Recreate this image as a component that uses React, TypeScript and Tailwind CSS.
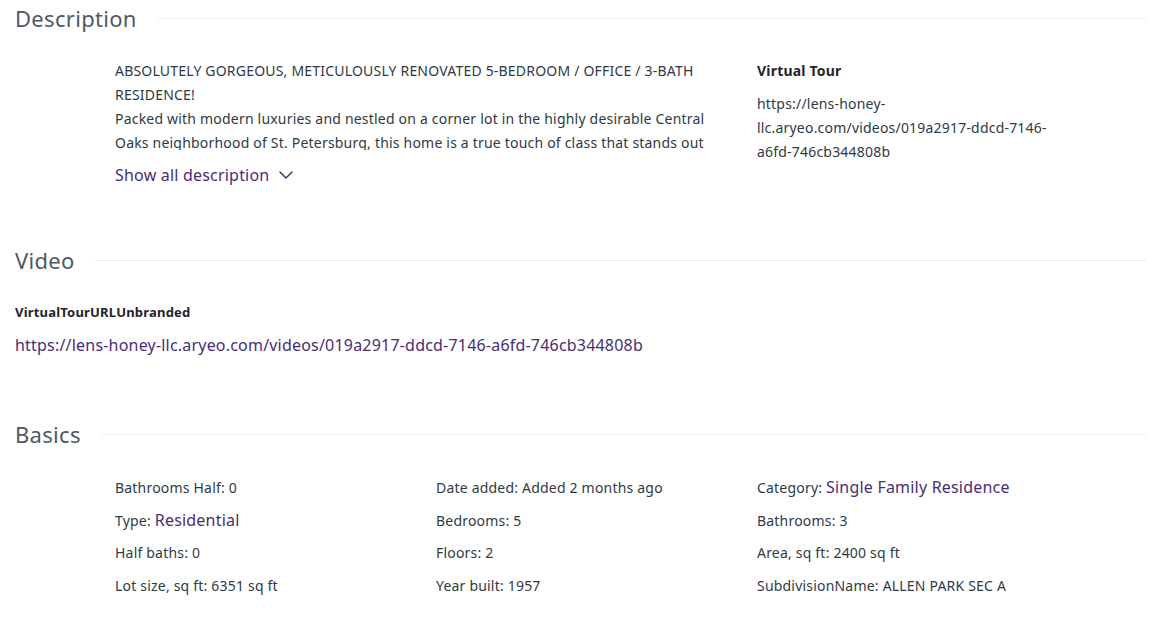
import React from "react";

const font = { fontFamily: '"Noto Sans", "Open Sans", sans-serif' };

function SectionTitle({ title }: { title: string }) {
  return (
    <div className="flex h-9 items-center gap-5">
      <h2 className="text-[22px] font-normal leading-9 tracking-[0.3px] text-[#4e5966]">{title}</h2>
      <div className="h-px flex-1 bg-[#eceff3]" />
    </div>
  );
}

function Chevron() {
  return (
    <svg width="14" height="8" viewBox="0 0 14 8" fill="none" stroke="currentColor" strokeWidth="1.5" strokeLinecap="round" strokeLinejoin="round">
      <path d="M1 1l6 6 6-6" />
    </svg>
  );
}

const basics: { label: string; value: string; link?: boolean }[] = [
  { label: "Bathrooms Half", value: "0" },
  { label: "Date added", value: "Added 2 months ago" },
  { label: "Category", value: "Single Family Residence", link: true },
  { label: "Type", value: "Residential", link: true },
  { label: "Bedrooms", value: "5" },
  { label: "Bathrooms", value: "3" },
  { label: "Half baths", value: "0" },
  { label: "Floors", value: "2" },
  { label: "Area, sq ft", value: "2400 sq ft" },
  { label: "Lot size, sq ft", value: "6351 sq ft" },
  { label: "Year built", value: "1957" },
  { label: "SubdivisionName", value: "ALLEN PARK SEC A" },
];

export default function App() {
  return (
    <div className="min-h-[641px] w-full bg-white pl-[15px] pr-[4px] tracking-[0.2px] text-[#2f3a44]" style={font}>
      {/* Description */}
      <section>
        <SectionTitle title="Description" />
        <div className="mt-[23px] grid grid-cols-[612px_1fr] gap-x-[30px] pl-[100px]">
          <div>
            <div className="h-[91px] overflow-hidden text-[14px] leading-6">
              ABSOLUTELY GORGEOUS, METICULOUSLY RENOVATED 5-BEDROOM / OFFICE / 3-BATH RESIDENCE!
              <br />
              Packed with modern luxuries and nestled on a corner lot in the highly desirable Central Oaks
              neighborhood of St. Petersburg, this home is a true touch of class that stands out from the rest.
            </div>
            <button className="mt-[13px] flex items-center gap-[10px] text-[16px] leading-6 text-[#4a2d74]">
              Show all description
              <Chevron />
            </button>
          </div>
          <div className="text-[14px] leading-6">
            <div className="font-bold text-[#1f2429]">Virtual Tour</div>
            <div className="mt-[9px] w-[300px] break-words">
              https://lens-honey-llc.aryeo.com/videos/019a2917-ddcd-7146-a6fd-746cb344808b
            </div>
          </div>
        </div>
      </section>

      {/* Video */}
      <section className="mt-[55px]">
        <SectionTitle title="Video" />
        <div className="mt-[22px] text-[13px] font-bold leading-6 text-[#1f2429]">VirtualTourURLUnbranded</div>
        <a className="mt-[9px] block text-[16px] leading-6 text-[#4a2d74]" href="#">
          https://lens-honey-llc.aryeo.com/videos/019a2917-ddcd-7146-a6fd-746cb344808b
        </a>
      </section>

      {/* Basics */}
      <section className="mt-[59px]">
        <SectionTitle title="Basics" />
        <div className="mt-[24px] grid grid-cols-[291px_291px_291px] gap-x-[30px] gap-y-[8.7px] pl-[100px] text-[14px] leading-6">
          {basics.map((b) => (
            <div key={b.label} className="h-6">
              {b.label}:{" "}
              {b.link ? <span className="text-[16px] leading-none text-[#4a2d74]">{b.value}</span> : b.value}
            </div>
          ))}
        </div>
      </section>
    </div>
  );
}
